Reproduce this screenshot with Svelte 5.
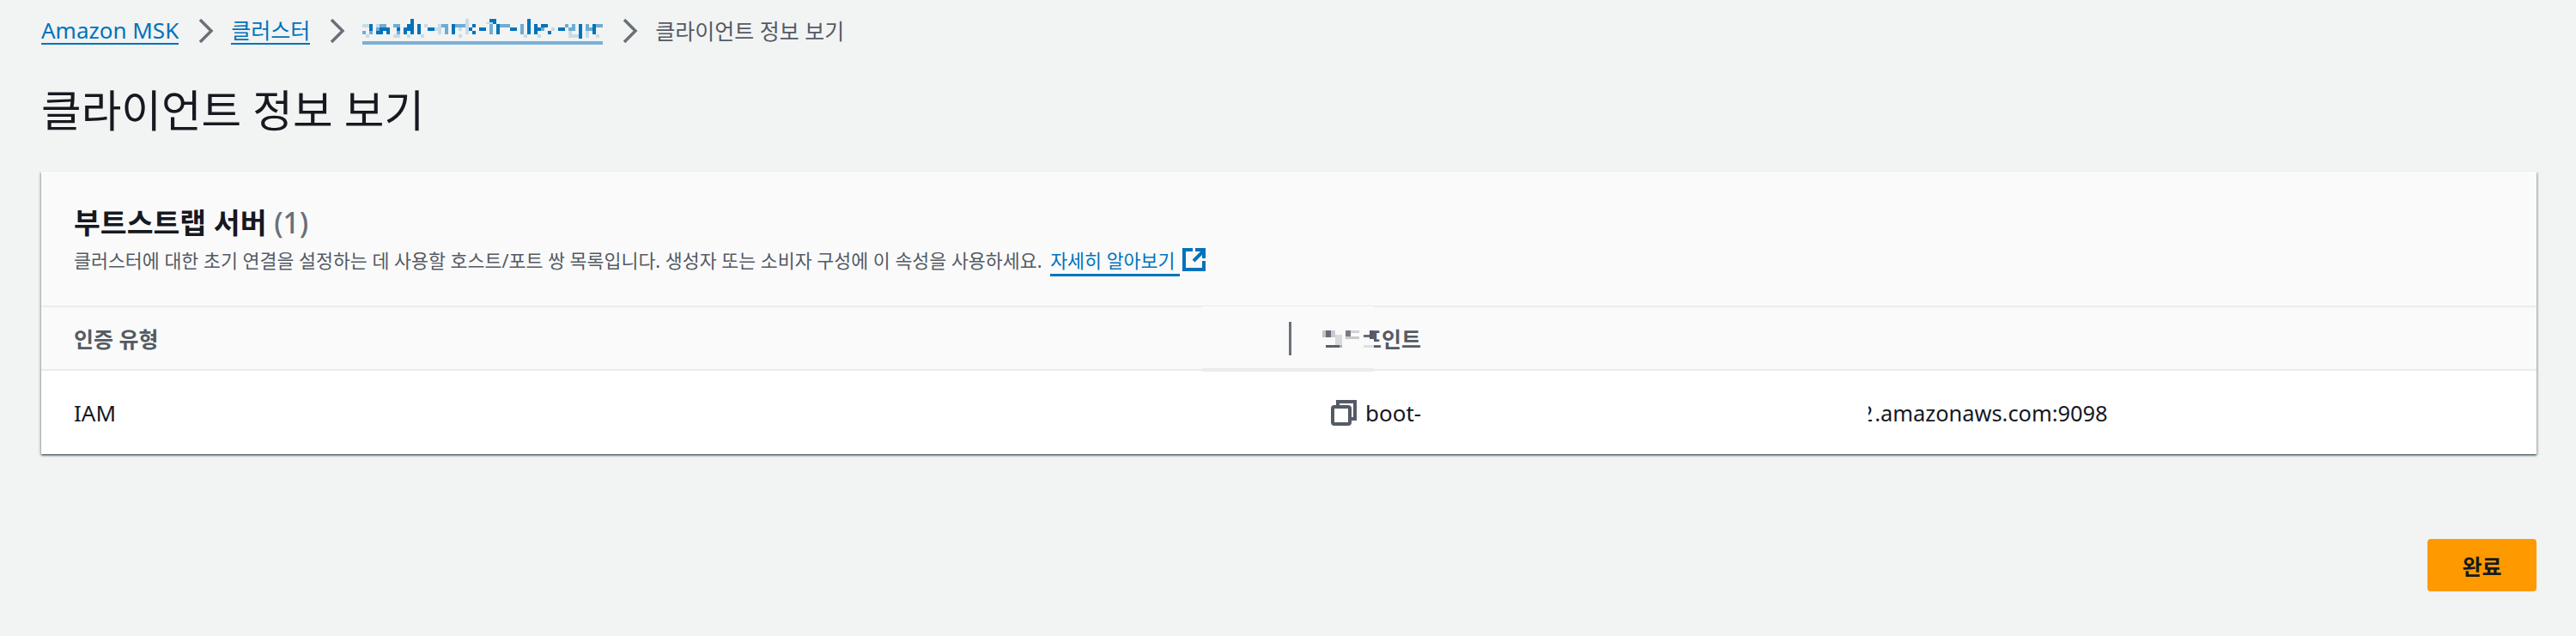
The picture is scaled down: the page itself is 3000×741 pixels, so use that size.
<script>
	// pixelated link text, 4px cells: one row per line, columns by shade
	const rows = [
		{ d: [14, 37, 38, 48], m: [], l: [30] },
		{ d: [14, 38, 48], m: [], l: [30, 36, 37] },
		{ d: [2, 13, 14, 16, 26, 32, 39, 48, 50, 52, 53, 63, 67], m: [5, 6, 9, 10, 23, 24, 27, 28, 29, 37, 40, 41, 42, 46, 59, 61, 65, 68, 69], l: [0, 1, 4, 18, 22, 30] },
		{ d: [2, 5, 6, 7, 10, 12, 13, 14, 16, 19, 20, 26, 31, 34, 35, 39, 43, 44, 48, 50, 51, 57, 58, 63, 67], m: [4, 24, 37, 46, 52, 60, 61, 65, 66], l: [21, 22, 28, 30, 55] },
		{ d: [4, 5, 7, 12, 14, 16, 26, 32, 39, 48, 50, 54, 63, 67], m: [0, 2, 10, 24, 37, 46], l: [22, 30, 60, 65] },
		{ d: [63], m: [], l: [1, 9, 10, 13, 17, 28, 47, 51, 60, 61, 62, 65, 68] },
		{ d: [63], m: [], l: [] }
	];
	const shades = { d: 1, m: 0.55, l: 0.18 };

	// leftover pixels of the covered header text: x, y, width, height, colour
	const specks = [
		[140, 28, 4, 8, "#c0c3c7"], [144, 28, 6, 8, "#666c75"], [150, 28, 5, 8, "#c8cacd"], [155, 33, 8, 15, "#d8dadc"],
		[144, 45, 16, 3, "#5a606a"], [160, 45, 3, 3, "#aaaeb2"],
		[167, 28, 6, 8, "#777c84"], [173, 28, 10, 3, "#cfd1d3"], [167, 35, 16, 3, "#c8cacc"],
		[188, 33, 12, 3, "#666c75"], [195, 28, 5, 10, "#555b64"], [188, 45, 12, 3, "#dddfe0"]
	];
</script>

<div class="page">
	<nav class="crumbs">
		<a class="latin" href="#msk">Amazon MSK</a>
		<svg class="chev" viewBox="0 0 18 28"><path d="M2 1l13 13L2 27" /></svg>
		<a href="#clusters">클러스터</a>
		<svg class="chev" viewBox="0 0 18 28"><path d="M2 1l13 13L2 27" /></svg>
		<a class="hidden-name" href="#cluster" aria-label="cluster">
			<svg width="280" height="26" viewBox="0 0 280 26" shape-rendering="crispEdges">
				{#each rows as row, i}
					{#each Object.keys(shades) as s}
						{#each row[s] as c}
							<rect x={c * 4} y={[3, 7, 9, 13, 17, 21, 25][i]} width="4" height={[4, 2, 4, 4, 4, 4, 1][i]} fill="#0073bb" opacity={shades[s]} />
						{/each}
					{/each}
				{/each}
			</svg>
		</a>
		<svg class="chev" viewBox="0 0 18 28"><path d="M2 1l13 13L2 27" /></svg>
		<span class="current">클라이언트 정보 보기</span>
	</nav>

	<h1>클라이언트 정보 보기</h1>

	<section class="card">
		<header>
			<h2>부트스트랩 서버 <span>(1)</span></h2>
			<p>
				클러스터에 대한 초기 연결을 설정하는 데 사용할 호스트/포트 쌍 목록입니다. 생성자 또는 소비자 구성에 이 속성을 사용하세요.
				<a href="#more">자세히 알아보기&nbsp;</a>
				<svg class="ext" viewBox="0 0 28 28"><path d="M12 3H2v23h23V16" /><path d="M13 16L25 4M15 3h10v10" /></svg>
			</p>
		</header>
		<div class="thead">
			<div class="col">인증 유형</div>
			<div class="second"><i></i>엔드포인트</div>
		</div>
		<div class="patch">
			<svg width="200" height="72" viewBox="0 0 200 72" shape-rendering="crispEdges">
				{#each specks as [x, y, w, h, fill]}
					<rect {x} {y} width={w} height={h} {fill} />
				{/each}
			</svg>
		</div>
		<div class="row">
			<div class="col">IAM</div>
			<div class="endpoint">
				<svg class="copy" viewBox="0 0 30 30"><path d="M8 7V2h20v20h-6" /><rect x="2" y="8" width="20" height="20" rx="2" /></svg>
				<span>boot-</span>
				<span class="cut">2</span>
				<span class="tail">.amazonaws.com:9098</span>
			</div>
		</div>
	</section>

	<div class="actions">
		<button>완료</button>
	</div>
</div>

<style>
	:global(body) {
		margin: 0;
		background: #f2f3f3;
	}
	.page {
		height: 741px;
		box-sizing: border-box;
		padding: 19px 46px 0 48px;
		font-family: "Noto Sans", "Noto Sans CJK KR", sans-serif;
		color: #16191f;
		overflow: hidden;
	}
	.crumbs {
		display: flex;
		align-items: center;
		height: 34px;
		font-size: 25px;
		line-height: 30px;
	}
	.crumbs a {
		color: #0073bb;
		text-decoration: none;
		border-bottom: 2px solid #0073bb;
	}
	.crumbs .latin {
		font-size: 26px;
	}
	.chev {
		width: 18px;
		height: 28px;
		margin: 0 20px 0 23px;
		fill: none;
		stroke: #687078;
		stroke-width: 3.5;
	}
	.crumbs .hidden-name {
		display: block;
		width: 280px;
		height: 33px;
		border-bottom: 4px solid #7ab0d8;
		box-sizing: border-box;
		margin-top: -1px;
	}
	.hidden-name svg {
		display: block;
	}
	.current {
		color: #545b64;
	}
	h1 {
		margin: 46px 0 41px;
		font-size: 50.7px;
		line-height: 60px;
		font-weight: 400;
	}
	.card {
		position: relative;
		height: 329px;
		background: #fff;
		box-shadow: 0 2px 2px rgba(0, 28, 36, 0.5), 2px 1px 2px rgba(0, 28, 36, 0.15), -2px 1px 2px rgba(0, 28, 36, 0.15);
	}
	header {
		height: 158px;
		box-sizing: border-box;
		padding: 40px 38px 0;
		background: #fafafa;
		border-bottom: 2px solid #eaeded;
	}
	h2 {
		margin: 0;
		font-size: 33.5px;
		line-height: 38px;
		font-weight: 700;
	}
	h2 span {
		font-weight: 500;
		color: #687078;
	}
	header p {
		margin: 8px 0 0;
		font-size: 21.7px;
		line-height: 36px;
		color: #545b64;
		white-space: nowrap;
	}
	header a {
		margin-left: 4px;
		color: #0073bb;
		text-decoration: none;
		border-bottom: 3px solid #0073bb;
		padding-bottom: 1px;
	}
	.ext {
		width: 28px;
		height: 28px;
		margin-left: -3px;
		vertical-align: -4px;
		fill: none;
		stroke: #0073bb;
		stroke-width: 4;
	}
	.thead,
	.row {
		display: flex;
		align-items: center;
		padding-left: 38px;
	}
	.thead {
		height: 72px;
		background: #fafafa;
		border-bottom: 2px solid #eaeded;
		font-size: 25px;
		font-weight: 700;
		color: #545b64;
	}
	.col {
		width: 1403px;
		flex: none;
	}
	.second {
		display: flex;
		align-items: center;
	}
	.second i {
		position: relative;
		z-index: 2;
		width: 3px;
		height: 39px;
		margin-left: 12px;
		margin-right: 36px;
		background: #687078;
	}
	.patch {
		position: absolute;
		left: 1352px;
		top: 157px;
		width: 200px;
		height: 72px;
		background: #fafafa;
		border-bottom: 4px solid #eaeded;
		pointer-events: none;
	}
	.row {
		height: 97px;
		font-size: 26px;
	}
	.endpoint {
		display: flex;
		align-items: center;
		padding-left: 61px;
	}
	.copy {
		width: 30px;
		height: 30px;
		margin-right: 10px;
		fill: #fff;
		stroke: #545b64;
		stroke-width: 4;
	}
	.cut {
		width: 5px;
		margin-left: 521px;
		overflow: hidden;
		direction: rtl;
		font-size: 25px;
	}
	.tail {
		margin-left: 2px;
		font-size: 25.4px;
	}
	.actions {
		display: flex;
		justify-content: flex-end;
		margin-top: 99px;
	}
	button {
		width: 127px;
		height: 61px;
		border: none;
		border-radius: 4px;
		background: #ff9900;
		color: #16191f;
		font: 700 25px "Noto Sans CJK KR", sans-serif;
	}
</style>
